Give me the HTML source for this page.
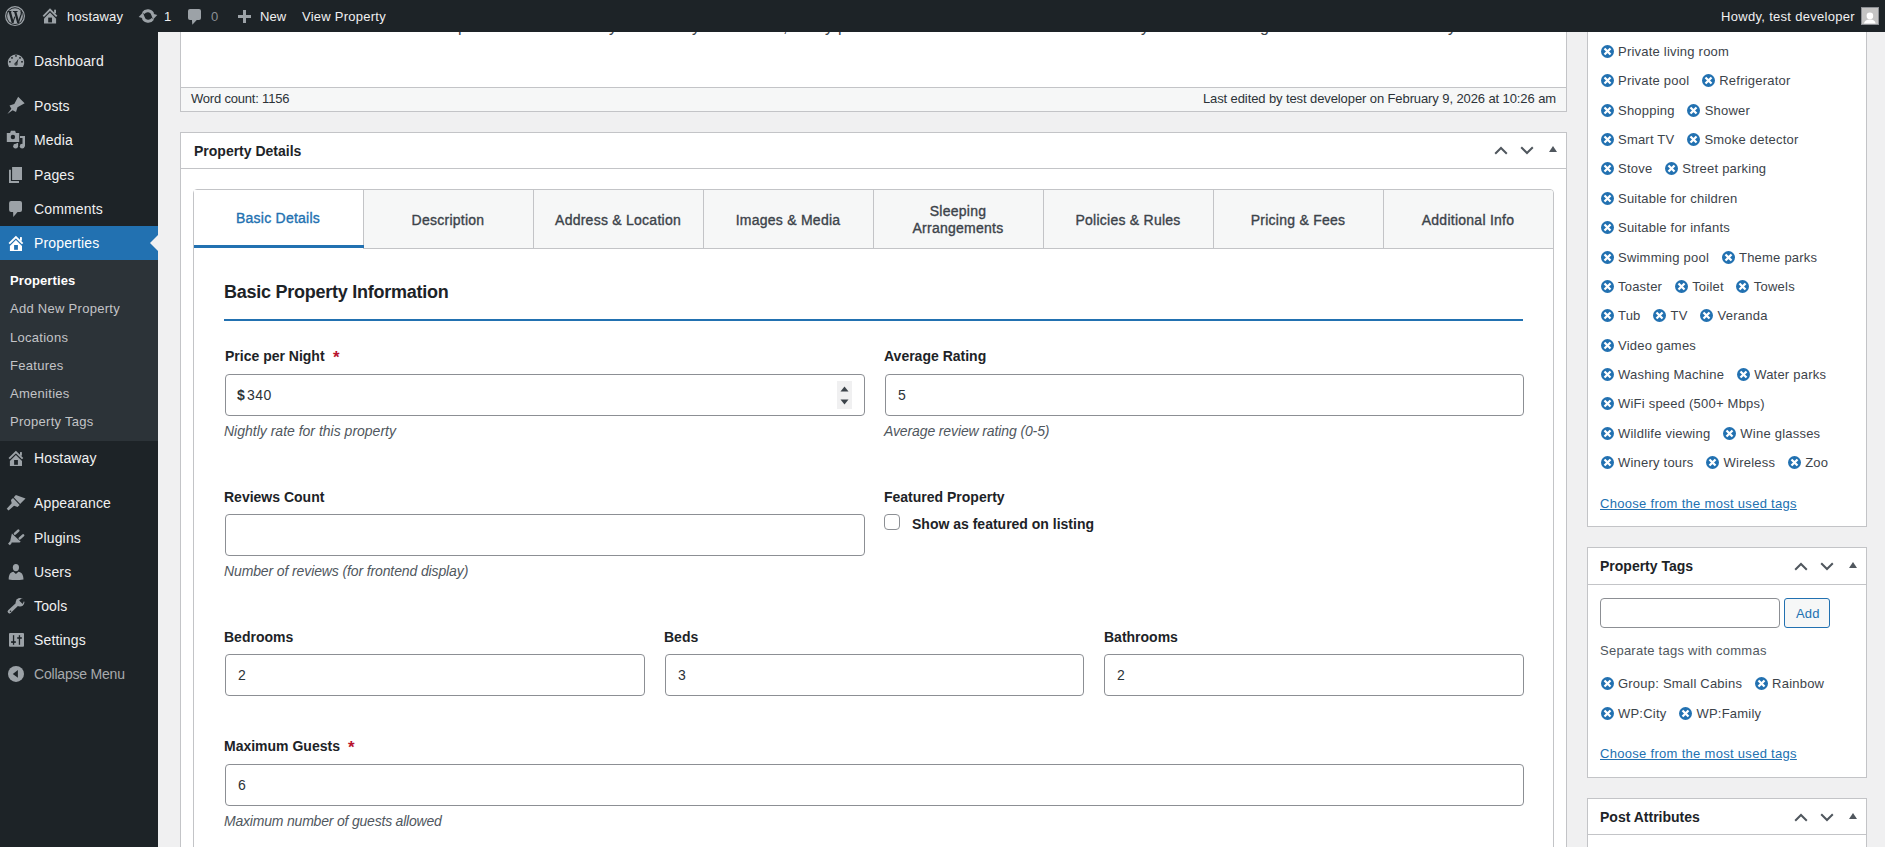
<!DOCTYPE html>
<html><head><meta charset="utf-8"><title>Edit Property</title>
<style>
html,body{margin:0;padding:0;}
body{width:1885px;height:847px;overflow:hidden;background:#f0f0f1;position:relative;font-family:"Liberation Sans",sans-serif;}
.a{position:absolute;box-sizing:border-box;}
.t{position:absolute;white-space:nowrap;}
</style></head><body>

<div class="a" style="left:180px;top:20px;width:1387px;height:92px;background:#fff;border:1px solid #c3c4c7;"></div>
<div class="t" style="left:218px;top:19px;font-size:16px;line-height:16px;color:#3c434a;font-weight:normal;font-style:normal;letter-spacing:0px;font-family:"Liberation Serif", serif;width:1330px;overflow:hidden;">as the result of the storied tradition in the realm of the hotel and inn this home is as close to resort as it comes and the best of the modern amenities are all added to it to enrich the stead and comfort of the home for all the visitors</div>
<div class="t" style="left:458px;top:19px;font-size:16px;line-height:16px;color:#3c434a;font-weight:normal;font-style:normal;letter-spacing:0px;font-family:"Liberation Serif", serif;background:#fff;padding:0 1px;">p</div>
<div class="t" style="left:609px;top:19px;font-size:16px;line-height:16px;color:#3c434a;font-weight:normal;font-style:normal;letter-spacing:0px;font-family:"Liberation Serif", serif;background:#fff;padding:0 1px;">y</div>
<div class="t" style="left:692px;top:19px;font-size:16px;line-height:16px;color:#3c434a;font-weight:normal;font-style:normal;letter-spacing:0px;font-family:"Liberation Serif", serif;background:#fff;padding:0 1px;">y</div>
<div class="t" style="left:783px;top:19px;font-size:16px;line-height:16px;color:#3c434a;font-weight:normal;font-style:normal;letter-spacing:0px;font-family:"Liberation Serif", serif;background:#fff;padding:0 1px;">,</div>
<div class="t" style="left:825px;top:19px;font-size:16px;line-height:16px;color:#3c434a;font-weight:normal;font-style:normal;letter-spacing:0px;font-family:"Liberation Serif", serif;background:#fff;padding:0 1px;">y</div>
<div class="t" style="left:838px;top:19px;font-size:16px;line-height:16px;color:#3c434a;font-weight:normal;font-style:normal;letter-spacing:0px;font-family:"Liberation Serif", serif;background:#fff;padding:0 1px;">p</div>
<div class="t" style="left:1141px;top:19px;font-size:16px;line-height:16px;color:#3c434a;font-weight:normal;font-style:normal;letter-spacing:0px;font-family:"Liberation Serif", serif;background:#fff;padding:0 1px;">y</div>
<div class="t" style="left:1260px;top:19px;font-size:16px;line-height:16px;color:#3c434a;font-weight:normal;font-style:normal;letter-spacing:0px;font-family:"Liberation Serif", serif;background:#fff;padding:0 1px;">g</div>
<div class="t" style="left:1448px;top:19px;font-size:16px;line-height:16px;color:#3c434a;font-weight:normal;font-style:normal;letter-spacing:0px;font-family:"Liberation Serif", serif;background:#fff;padding:0 1px;">y</div>
<div class="a" style="left:180px;top:87px;width:1387px;height:25px;background:#f6f7f7;border:1px solid #c3c4c7;"></div>
<div class="t" style="left:191px;top:92px;font-size:13px;line-height:13px;color:#2c3338;font-weight:normal;font-style:normal;letter-spacing:-0.2px;">Word count: 1156</div>
<div class="t" style="right:329px;top:92px;font-size:13px;line-height:13px;color:#2c3338;letter-spacing:-0.1px">Last edited by test developer on February 9, 2026 at 10:26 am</div>
<div class="a" style="left:180px;top:132px;width:1387px;height:760px;background:#fff;border:1px solid #c3c4c7;"></div>
<div class="a" style="left:180px;top:168px;width:1387px;height:1px;background:#c3c4c7;"></div>
<div class="t" style="left:194px;top:144px;font-size:14px;line-height:14px;color:#1d2327;font-weight:bold;font-style:normal;letter-spacing:0px;">Property Details</div>
<svg class="a" style="left:1494px;top:146px;" width="14" height="9" viewBox="0 0 14 9"><polyline points="1.2,7.8 7,2 12.8,7.8" fill="none" stroke="#50575e" stroke-width="2"/></svg>
<svg class="a" style="left:1520px;top:146px;" width="14" height="9" viewBox="0 0 14 9"><polyline points="1.2,1.2 7,7 12.8,1.2" fill="none" stroke="#50575e" stroke-width="2"/></svg>
<svg class="a" style="left:1549px;top:146px;" width="8" height="7" viewBox="0 0 8 7"><polygon points="0,6 4,0 8,6" fill="#50575e"/></svg>
<div class="a" style="left:193px;top:189px;width:1361px;height:700px;background:#fff;border:1px solid #c3c4c7;border-radius:4px 4px 0 0;"></div>
<div class="a" style="left:194px;top:190px;width:169px;height:55px;background:#fff;"></div>
<div class="a" style="left:363px;top:190px;width:170px;height:59px;background:#f6f7f7;border-left:1px solid #c3c4c7;border-bottom:1px solid #c3c4c7;"></div>
<div class="a" style="left:533px;top:190px;width:170px;height:59px;background:#f6f7f7;border-left:1px solid #c3c4c7;border-bottom:1px solid #c3c4c7;"></div>
<div class="a" style="left:703px;top:190px;width:170px;height:59px;background:#f6f7f7;border-left:1px solid #c3c4c7;border-bottom:1px solid #c3c4c7;"></div>
<div class="a" style="left:873px;top:190px;width:170px;height:59px;background:#f6f7f7;border-left:1px solid #c3c4c7;border-bottom:1px solid #c3c4c7;"></div>
<div class="a" style="left:1043px;top:190px;width:170px;height:59px;background:#f6f7f7;border-left:1px solid #c3c4c7;border-bottom:1px solid #c3c4c7;"></div>
<div class="a" style="left:1213px;top:190px;width:170px;height:59px;background:#f6f7f7;border-left:1px solid #c3c4c7;border-bottom:1px solid #c3c4c7;"></div>
<div class="a" style="left:1383px;top:190px;width:170px;height:59px;background:#f6f7f7;border-left:1px solid #c3c4c7;border-bottom:1px solid #c3c4c7;border-top-right-radius:3px;"></div>
<div class="a" style="left:194px;top:245px;width:170px;height:3px;background:#2271b1;"></div>
<div class="t" style="left:193px;width:170px;text-align:center;top:211px;font-size:14px;line-height:14px;color:#2271b1;letter-spacing:0.25px;-webkit-text-stroke:0.35px #2271b1;">Basic Details</div>
<div class="t" style="left:363px;width:170px;text-align:center;top:213px;font-size:14px;line-height:14px;color:#3c434a;letter-spacing:0.25px;-webkit-text-stroke:0.35px #3c434a;">Description</div>
<div class="t" style="left:533px;width:170px;text-align:center;top:213px;font-size:14px;line-height:14px;color:#3c434a;letter-spacing:0.25px;-webkit-text-stroke:0.35px #3c434a;">Address &amp; Location</div>
<div class="t" style="left:703px;width:170px;text-align:center;top:213px;font-size:14px;line-height:14px;color:#3c434a;letter-spacing:0.25px;-webkit-text-stroke:0.35px #3c434a;">Images &amp; Media</div>
<div class="t" style="left:873px;width:170px;text-align:center;top:203px;font-size:14px;line-height:17px;color:#3c434a;letter-spacing:0.25px;-webkit-text-stroke:0.35px #3c434a;">Sleeping<br>Arrangements</div>
<div class="t" style="left:1043px;width:170px;text-align:center;top:213px;font-size:14px;line-height:14px;color:#3c434a;letter-spacing:0.25px;-webkit-text-stroke:0.35px #3c434a;">Policies &amp; Rules</div>
<div class="t" style="left:1213px;width:170px;text-align:center;top:213px;font-size:14px;line-height:14px;color:#3c434a;letter-spacing:0.25px;-webkit-text-stroke:0.35px #3c434a;">Pricing &amp; Fees</div>
<div class="t" style="left:1383px;width:170px;text-align:center;top:213px;font-size:14px;line-height:14px;color:#3c434a;letter-spacing:0.25px;-webkit-text-stroke:0.35px #3c434a;">Additional Info</div>
<div class="t" style="left:224px;top:283px;font-size:18px;line-height:18px;color:#1d2327;font-weight:bold;font-style:normal;letter-spacing:-0.25px;">Basic Property Information</div>
<div class="a" style="left:224px;top:319px;width:1299px;height:2px;background:#2271b1;"></div>
<div class="t" style="left:225px;top:349px;font-size:14px;line-height:14px;color:#1d2327;font-weight:bold;font-style:normal;letter-spacing:0px;">Price per Night</div>
<div class="t" style="left:333px;top:349px;font-size:17px;line-height:17px;color:#b8142f;font-weight:bold;font-style:normal;letter-spacing:0px;">*</div>
<div class="a" style="left:225px;top:374px;width:640px;height:42px;background:#fff;border:1px solid #8c8f94;border-radius:4px;"></div>
<div class="t" style="left:237px;top:388px;font-size:14px;line-height:14px;color:#2c3338;font-weight:bold;font-style:normal;letter-spacing:0px;">$</div>
<div class="t" style="left:247px;top:388px;font-size:14px;line-height:14px;color:#2c3338;font-weight:normal;font-style:normal;letter-spacing:0.5px;">340</div>
<div class="a" style="left:837px;top:381px;width:15px;height:28px;background:#f0f0f1;"></div>
<svg class="a" style="left:840px;top:386px;" width="9" height="6" viewBox="0 0 9 6"><polygon points="0.5,5.5 4.5,0.5 8.5,5.5" fill="#3c434a"/></svg>
<svg class="a" style="left:840px;top:399px;" width="9" height="6" viewBox="0 0 9 6"><polygon points="0.5,0.5 4.5,5.5 8.5,0.5" fill="#3c434a"/></svg>
<div class="t" style="left:224px;top:424px;font-size:14px;line-height:14px;color:#50575e;font-weight:normal;font-style:italic;letter-spacing:0px;">Nightly rate for this property</div>
<div class="t" style="left:884px;top:349px;font-size:14px;line-height:14px;color:#1d2327;font-weight:bold;font-style:normal;letter-spacing:0px;">Average Rating</div>
<div class="a" style="left:885px;top:374px;width:639px;height:42px;background:#fff;border:1px solid #8c8f94;border-radius:4px;"></div>
<div class="t" style="left:898px;top:388px;font-size:14px;line-height:14px;color:#2c3338;font-weight:normal;font-style:normal;letter-spacing:0px;">5</div>
<div class="t" style="left:884px;top:424px;font-size:14px;line-height:14px;color:#50575e;font-weight:normal;font-style:italic;letter-spacing:-0.12px;">Average review rating (0-5)</div>
<div class="t" style="left:224px;top:490px;font-size:14px;line-height:14px;color:#1d2327;font-weight:bold;font-style:normal;letter-spacing:0px;">Reviews Count</div>
<div class="a" style="left:225px;top:514px;width:640px;height:42px;background:#fff;border:1px solid #8c8f94;border-radius:4px;"></div>
<div class="t" style="left:224px;top:564px;font-size:14px;line-height:14px;color:#50575e;font-weight:normal;font-style:italic;letter-spacing:-0.12px;">Number of reviews (for frontend display)</div>
<div class="t" style="left:884px;top:490px;font-size:14px;line-height:14px;color:#1d2327;font-weight:bold;font-style:normal;letter-spacing:0px;">Featured Property</div>
<div class="a" style="left:884px;top:514px;width:16px;height:16px;background:#fff;border:1px solid #8c8f94;border-radius:4px;"></div>
<div class="t" style="left:912px;top:517px;font-size:14px;line-height:14px;color:#1d2327;font-weight:bold;font-style:normal;letter-spacing:0px;">Show as featured on listing</div>
<div class="t" style="left:224px;top:630px;font-size:14px;line-height:14px;color:#1d2327;font-weight:bold;font-style:normal;letter-spacing:0px;">Bedrooms</div>
<div class="a" style="left:225px;top:654px;width:420px;height:42px;background:#fff;border:1px solid #8c8f94;border-radius:4px;"></div>
<div class="t" style="left:238px;top:668px;font-size:14px;line-height:14px;color:#2c3338;font-weight:normal;font-style:normal;letter-spacing:0px;">2</div>
<div class="t" style="left:664px;top:630px;font-size:14px;line-height:14px;color:#1d2327;font-weight:bold;font-style:normal;letter-spacing:0px;">Beds</div>
<div class="a" style="left:665px;top:654px;width:419px;height:42px;background:#fff;border:1px solid #8c8f94;border-radius:4px;"></div>
<div class="t" style="left:678px;top:668px;font-size:14px;line-height:14px;color:#2c3338;font-weight:normal;font-style:normal;letter-spacing:0px;">3</div>
<div class="t" style="left:1104px;top:630px;font-size:14px;line-height:14px;color:#1d2327;font-weight:bold;font-style:normal;letter-spacing:0px;">Bathrooms</div>
<div class="a" style="left:1104px;top:654px;width:420px;height:42px;background:#fff;border:1px solid #8c8f94;border-radius:4px;"></div>
<div class="t" style="left:1117px;top:668px;font-size:14px;line-height:14px;color:#2c3338;font-weight:normal;font-style:normal;letter-spacing:0px;">2</div>
<div class="t" style="left:224px;top:739px;font-size:14px;line-height:14px;color:#1d2327;font-weight:bold;font-style:normal;letter-spacing:0px;">Maximum Guests</div>
<div class="t" style="left:348px;top:739px;font-size:17px;line-height:17px;color:#b8142f;font-weight:bold;font-style:normal;letter-spacing:0px;">*</div>
<div class="a" style="left:225px;top:764px;width:1299px;height:42px;background:#fff;border:1px solid #8c8f94;border-radius:4px;"></div>
<div class="t" style="left:238px;top:778px;font-size:14px;line-height:14px;color:#2c3338;font-weight:normal;font-style:normal;letter-spacing:0px;">6</div>
<div class="t" style="left:224px;top:814px;font-size:14px;line-height:14px;color:#50575e;font-weight:normal;font-style:italic;letter-spacing:-0.2px;">Maximum number of guests allowed</div>
<div class="a" style="left:1587px;top:20px;width:280px;height:507px;background:#fff;border:1px solid #c3c4c7;"></div>
<div class="t" style="left:1600px;top:45px;font-size:13px;line-height:13px;color:#3c434a;display:flex;"><span style="display:inline-flex;align-items:flex-start;margin-right:12px;"><svg width="13" height="13" viewBox="0 0 13 13" style="margin-right:4.4px;margin-left:0.6px;margin-top:0.4px"><circle cx="6.5" cy="6.5" r="6.5" fill="#2271b1"/><path d="M3.5 3.5 L9.5 9.5 M9.5 3.5 L3.5 9.5" stroke="#fff" stroke-width="2.3"/></svg><span style="letter-spacing:0.22px">Private living room</span></span></div>
<div class="t" style="left:1600px;top:74px;font-size:13px;line-height:13px;color:#3c434a;display:flex;"><span style="display:inline-flex;align-items:flex-start;margin-right:12px;"><svg width="13" height="13" viewBox="0 0 13 13" style="margin-right:4.4px;margin-left:0.6px;margin-top:0.4px"><circle cx="6.5" cy="6.5" r="6.5" fill="#2271b1"/><path d="M3.5 3.5 L9.5 9.5 M9.5 3.5 L3.5 9.5" stroke="#fff" stroke-width="2.3"/></svg><span style="letter-spacing:0.22px">Private pool</span></span><span style="display:inline-flex;align-items:flex-start;margin-right:12px;"><svg width="13" height="13" viewBox="0 0 13 13" style="margin-right:4.4px;margin-left:0.6px;margin-top:0.4px"><circle cx="6.5" cy="6.5" r="6.5" fill="#2271b1"/><path d="M3.5 3.5 L9.5 9.5 M9.5 3.5 L3.5 9.5" stroke="#fff" stroke-width="2.3"/></svg><span style="letter-spacing:0.22px">Refrigerator</span></span></div>
<div class="t" style="left:1600px;top:104px;font-size:13px;line-height:13px;color:#3c434a;display:flex;"><span style="display:inline-flex;align-items:flex-start;margin-right:12px;"><svg width="13" height="13" viewBox="0 0 13 13" style="margin-right:4.4px;margin-left:0.6px;margin-top:0.4px"><circle cx="6.5" cy="6.5" r="6.5" fill="#2271b1"/><path d="M3.5 3.5 L9.5 9.5 M9.5 3.5 L3.5 9.5" stroke="#fff" stroke-width="2.3"/></svg><span style="letter-spacing:0.22px">Shopping</span></span><span style="display:inline-flex;align-items:flex-start;margin-right:12px;"><svg width="13" height="13" viewBox="0 0 13 13" style="margin-right:4.4px;margin-left:0.6px;margin-top:0.4px"><circle cx="6.5" cy="6.5" r="6.5" fill="#2271b1"/><path d="M3.5 3.5 L9.5 9.5 M9.5 3.5 L3.5 9.5" stroke="#fff" stroke-width="2.3"/></svg><span style="letter-spacing:0.22px">Shower</span></span></div>
<div class="t" style="left:1600px;top:133px;font-size:13px;line-height:13px;color:#3c434a;display:flex;"><span style="display:inline-flex;align-items:flex-start;margin-right:12px;"><svg width="13" height="13" viewBox="0 0 13 13" style="margin-right:4.4px;margin-left:0.6px;margin-top:0.4px"><circle cx="6.5" cy="6.5" r="6.5" fill="#2271b1"/><path d="M3.5 3.5 L9.5 9.5 M9.5 3.5 L3.5 9.5" stroke="#fff" stroke-width="2.3"/></svg><span style="letter-spacing:0.22px">Smart TV</span></span><span style="display:inline-flex;align-items:flex-start;margin-right:12px;"><svg width="13" height="13" viewBox="0 0 13 13" style="margin-right:4.4px;margin-left:0.6px;margin-top:0.4px"><circle cx="6.5" cy="6.5" r="6.5" fill="#2271b1"/><path d="M3.5 3.5 L9.5 9.5 M9.5 3.5 L3.5 9.5" stroke="#fff" stroke-width="2.3"/></svg><span style="letter-spacing:0.22px">Smoke detector</span></span></div>
<div class="t" style="left:1600px;top:162px;font-size:13px;line-height:13px;color:#3c434a;display:flex;"><span style="display:inline-flex;align-items:flex-start;margin-right:12px;"><svg width="13" height="13" viewBox="0 0 13 13" style="margin-right:4.4px;margin-left:0.6px;margin-top:0.4px"><circle cx="6.5" cy="6.5" r="6.5" fill="#2271b1"/><path d="M3.5 3.5 L9.5 9.5 M9.5 3.5 L3.5 9.5" stroke="#fff" stroke-width="2.3"/></svg><span style="letter-spacing:0.22px">Stove</span></span><span style="display:inline-flex;align-items:flex-start;margin-right:12px;"><svg width="13" height="13" viewBox="0 0 13 13" style="margin-right:4.4px;margin-left:0.6px;margin-top:0.4px"><circle cx="6.5" cy="6.5" r="6.5" fill="#2271b1"/><path d="M3.5 3.5 L9.5 9.5 M9.5 3.5 L3.5 9.5" stroke="#fff" stroke-width="2.3"/></svg><span style="letter-spacing:0.22px">Street parking</span></span></div>
<div class="t" style="left:1600px;top:192px;font-size:13px;line-height:13px;color:#3c434a;display:flex;"><span style="display:inline-flex;align-items:flex-start;margin-right:12px;"><svg width="13" height="13" viewBox="0 0 13 13" style="margin-right:4.4px;margin-left:0.6px;margin-top:0.4px"><circle cx="6.5" cy="6.5" r="6.5" fill="#2271b1"/><path d="M3.5 3.5 L9.5 9.5 M9.5 3.5 L3.5 9.5" stroke="#fff" stroke-width="2.3"/></svg><span style="letter-spacing:0.22px">Suitable for children</span></span></div>
<div class="t" style="left:1600px;top:221px;font-size:13px;line-height:13px;color:#3c434a;display:flex;"><span style="display:inline-flex;align-items:flex-start;margin-right:12px;"><svg width="13" height="13" viewBox="0 0 13 13" style="margin-right:4.4px;margin-left:0.6px;margin-top:0.4px"><circle cx="6.5" cy="6.5" r="6.5" fill="#2271b1"/><path d="M3.5 3.5 L9.5 9.5 M9.5 3.5 L3.5 9.5" stroke="#fff" stroke-width="2.3"/></svg><span style="letter-spacing:0.22px">Suitable for infants</span></span></div>
<div class="t" style="left:1600px;top:251px;font-size:13px;line-height:13px;color:#3c434a;display:flex;"><span style="display:inline-flex;align-items:flex-start;margin-right:12px;"><svg width="13" height="13" viewBox="0 0 13 13" style="margin-right:4.4px;margin-left:0.6px;margin-top:0.4px"><circle cx="6.5" cy="6.5" r="6.5" fill="#2271b1"/><path d="M3.5 3.5 L9.5 9.5 M9.5 3.5 L3.5 9.5" stroke="#fff" stroke-width="2.3"/></svg><span style="letter-spacing:0.22px">Swimming pool</span></span><span style="display:inline-flex;align-items:flex-start;margin-right:12px;"><svg width="13" height="13" viewBox="0 0 13 13" style="margin-right:4.4px;margin-left:0.6px;margin-top:0.4px"><circle cx="6.5" cy="6.5" r="6.5" fill="#2271b1"/><path d="M3.5 3.5 L9.5 9.5 M9.5 3.5 L3.5 9.5" stroke="#fff" stroke-width="2.3"/></svg><span style="letter-spacing:0.22px">Theme parks</span></span></div>
<div class="t" style="left:1600px;top:280px;font-size:13px;line-height:13px;color:#3c434a;display:flex;"><span style="display:inline-flex;align-items:flex-start;margin-right:12px;"><svg width="13" height="13" viewBox="0 0 13 13" style="margin-right:4.4px;margin-left:0.6px;margin-top:0.4px"><circle cx="6.5" cy="6.5" r="6.5" fill="#2271b1"/><path d="M3.5 3.5 L9.5 9.5 M9.5 3.5 L3.5 9.5" stroke="#fff" stroke-width="2.3"/></svg><span style="letter-spacing:0.22px">Toaster</span></span><span style="display:inline-flex;align-items:flex-start;margin-right:12px;"><svg width="13" height="13" viewBox="0 0 13 13" style="margin-right:4.4px;margin-left:0.6px;margin-top:0.4px"><circle cx="6.5" cy="6.5" r="6.5" fill="#2271b1"/><path d="M3.5 3.5 L9.5 9.5 M9.5 3.5 L3.5 9.5" stroke="#fff" stroke-width="2.3"/></svg><span style="letter-spacing:0.22px">Toilet</span></span><span style="display:inline-flex;align-items:flex-start;margin-right:12px;"><svg width="13" height="13" viewBox="0 0 13 13" style="margin-right:4.4px;margin-left:0.6px;margin-top:0.4px"><circle cx="6.5" cy="6.5" r="6.5" fill="#2271b1"/><path d="M3.5 3.5 L9.5 9.5 M9.5 3.5 L3.5 9.5" stroke="#fff" stroke-width="2.3"/></svg><span style="letter-spacing:0.22px">Towels</span></span></div>
<div class="t" style="left:1600px;top:309px;font-size:13px;line-height:13px;color:#3c434a;display:flex;"><span style="display:inline-flex;align-items:flex-start;margin-right:12px;"><svg width="13" height="13" viewBox="0 0 13 13" style="margin-right:4.4px;margin-left:0.6px;margin-top:0.4px"><circle cx="6.5" cy="6.5" r="6.5" fill="#2271b1"/><path d="M3.5 3.5 L9.5 9.5 M9.5 3.5 L3.5 9.5" stroke="#fff" stroke-width="2.3"/></svg><span style="letter-spacing:0.22px">Tub</span></span><span style="display:inline-flex;align-items:flex-start;margin-right:12px;"><svg width="13" height="13" viewBox="0 0 13 13" style="margin-right:4.4px;margin-left:0.6px;margin-top:0.4px"><circle cx="6.5" cy="6.5" r="6.5" fill="#2271b1"/><path d="M3.5 3.5 L9.5 9.5 M9.5 3.5 L3.5 9.5" stroke="#fff" stroke-width="2.3"/></svg><span style="letter-spacing:0.22px">TV</span></span><span style="display:inline-flex;align-items:flex-start;margin-right:12px;"><svg width="13" height="13" viewBox="0 0 13 13" style="margin-right:4.4px;margin-left:0.6px;margin-top:0.4px"><circle cx="6.5" cy="6.5" r="6.5" fill="#2271b1"/><path d="M3.5 3.5 L9.5 9.5 M9.5 3.5 L3.5 9.5" stroke="#fff" stroke-width="2.3"/></svg><span style="letter-spacing:0.22px">Veranda</span></span></div>
<div class="t" style="left:1600px;top:339px;font-size:13px;line-height:13px;color:#3c434a;display:flex;"><span style="display:inline-flex;align-items:flex-start;margin-right:12px;"><svg width="13" height="13" viewBox="0 0 13 13" style="margin-right:4.4px;margin-left:0.6px;margin-top:0.4px"><circle cx="6.5" cy="6.5" r="6.5" fill="#2271b1"/><path d="M3.5 3.5 L9.5 9.5 M9.5 3.5 L3.5 9.5" stroke="#fff" stroke-width="2.3"/></svg><span style="letter-spacing:0.22px">Video games</span></span></div>
<div class="t" style="left:1600px;top:368px;font-size:13px;line-height:13px;color:#3c434a;display:flex;"><span style="display:inline-flex;align-items:flex-start;margin-right:12px;"><svg width="13" height="13" viewBox="0 0 13 13" style="margin-right:4.4px;margin-left:0.6px;margin-top:0.4px"><circle cx="6.5" cy="6.5" r="6.5" fill="#2271b1"/><path d="M3.5 3.5 L9.5 9.5 M9.5 3.5 L3.5 9.5" stroke="#fff" stroke-width="2.3"/></svg><span style="letter-spacing:0.22px">Washing Machine</span></span><span style="display:inline-flex;align-items:flex-start;margin-right:12px;"><svg width="13" height="13" viewBox="0 0 13 13" style="margin-right:4.4px;margin-left:0.6px;margin-top:0.4px"><circle cx="6.5" cy="6.5" r="6.5" fill="#2271b1"/><path d="M3.5 3.5 L9.5 9.5 M9.5 3.5 L3.5 9.5" stroke="#fff" stroke-width="2.3"/></svg><span style="letter-spacing:0.22px">Water parks</span></span></div>
<div class="t" style="left:1600px;top:397px;font-size:13px;line-height:13px;color:#3c434a;display:flex;"><span style="display:inline-flex;align-items:flex-start;margin-right:12px;"><svg width="13" height="13" viewBox="0 0 13 13" style="margin-right:4.4px;margin-left:0.6px;margin-top:0.4px"><circle cx="6.5" cy="6.5" r="6.5" fill="#2271b1"/><path d="M3.5 3.5 L9.5 9.5 M9.5 3.5 L3.5 9.5" stroke="#fff" stroke-width="2.3"/></svg><span style="letter-spacing:0.22px">WiFi speed (500+ Mbps)</span></span></div>
<div class="t" style="left:1600px;top:427px;font-size:13px;line-height:13px;color:#3c434a;display:flex;"><span style="display:inline-flex;align-items:flex-start;margin-right:12px;"><svg width="13" height="13" viewBox="0 0 13 13" style="margin-right:4.4px;margin-left:0.6px;margin-top:0.4px"><circle cx="6.5" cy="6.5" r="6.5" fill="#2271b1"/><path d="M3.5 3.5 L9.5 9.5 M9.5 3.5 L3.5 9.5" stroke="#fff" stroke-width="2.3"/></svg><span style="letter-spacing:0.22px">Wildlife viewing</span></span><span style="display:inline-flex;align-items:flex-start;margin-right:12px;"><svg width="13" height="13" viewBox="0 0 13 13" style="margin-right:4.4px;margin-left:0.6px;margin-top:0.4px"><circle cx="6.5" cy="6.5" r="6.5" fill="#2271b1"/><path d="M3.5 3.5 L9.5 9.5 M9.5 3.5 L3.5 9.5" stroke="#fff" stroke-width="2.3"/></svg><span style="letter-spacing:0.22px">Wine glasses</span></span></div>
<div class="t" style="left:1600px;top:456px;font-size:13px;line-height:13px;color:#3c434a;display:flex;"><span style="display:inline-flex;align-items:flex-start;margin-right:12px;"><svg width="13" height="13" viewBox="0 0 13 13" style="margin-right:4.4px;margin-left:0.6px;margin-top:0.4px"><circle cx="6.5" cy="6.5" r="6.5" fill="#2271b1"/><path d="M3.5 3.5 L9.5 9.5 M9.5 3.5 L3.5 9.5" stroke="#fff" stroke-width="2.3"/></svg><span style="letter-spacing:0.22px">Winery tours</span></span><span style="display:inline-flex;align-items:flex-start;margin-right:12px;"><svg width="13" height="13" viewBox="0 0 13 13" style="margin-right:4.4px;margin-left:0.6px;margin-top:0.4px"><circle cx="6.5" cy="6.5" r="6.5" fill="#2271b1"/><path d="M3.5 3.5 L9.5 9.5 M9.5 3.5 L3.5 9.5" stroke="#fff" stroke-width="2.3"/></svg><span style="letter-spacing:0.22px">Wireless</span></span><span style="display:inline-flex;align-items:flex-start;margin-right:12px;"><svg width="13" height="13" viewBox="0 0 13 13" style="margin-right:4.4px;margin-left:0.6px;margin-top:0.4px"><circle cx="6.5" cy="6.5" r="6.5" fill="#2271b1"/><path d="M3.5 3.5 L9.5 9.5 M9.5 3.5 L3.5 9.5" stroke="#fff" stroke-width="2.3"/></svg><span style="letter-spacing:0.22px">Zoo</span></span></div>
<div class="t" style="left:1600px;top:497px;font-size:13px;line-height:13px;color:#2271b1;text-decoration:underline;letter-spacing:0.3px">Choose from the most used tags</div>
<div class="a" style="left:1587px;top:547px;width:280px;height:231px;background:#fff;border:1px solid #c3c4c7;"></div>
<div class="a" style="left:1587px;top:584px;width:280px;height:1px;background:#c3c4c7;"></div>
<div class="t" style="left:1600px;top:559px;font-size:14px;line-height:14px;color:#1d2327;font-weight:bold;font-style:normal;letter-spacing:0px;">Property Tags</div>
<svg class="a" style="left:1794px;top:562px;" width="14" height="9" viewBox="0 0 14 9"><polyline points="1.2,7.8 7,2 12.8,7.8" fill="none" stroke="#50575e" stroke-width="2"/></svg>
<svg class="a" style="left:1820px;top:562px;" width="14" height="9" viewBox="0 0 14 9"><polyline points="1.2,1.2 7,7 12.8,1.2" fill="none" stroke="#50575e" stroke-width="2"/></svg>
<svg class="a" style="left:1849px;top:562px;" width="8" height="7" viewBox="0 0 8 7"><polygon points="0,6 4,0 8,6" fill="#50575e"/></svg>
<div class="a" style="left:1600px;top:598px;width:180px;height:30px;background:#fff;border:1px solid #8c8f94;border-radius:4px;"></div>
<div class="a" style="left:1784px;top:598px;width:46px;height:30px;background:#f6f7f7;border:1px solid #2271b1;border-radius:3px;"></div>
<div class="t" style="left:1796px;top:607px;font-size:13px;line-height:13px;color:#2271b1;font-weight:normal;font-style:normal;letter-spacing:0.2px;">Add</div>
<div class="t" style="left:1600px;top:644px;font-size:13px;line-height:13px;color:#50575e;font-weight:normal;font-style:normal;letter-spacing:0.25px;">Separate tags with commas</div>
<div class="t" style="left:1600px;top:677px;font-size:13px;line-height:13px;color:#3c434a;display:flex;"><span style="display:inline-flex;align-items:flex-start;margin-right:12px;"><svg width="13" height="13" viewBox="0 0 13 13" style="margin-right:4.4px;margin-left:0.6px;margin-top:0.4px"><circle cx="6.5" cy="6.5" r="6.5" fill="#2271b1"/><path d="M3.5 3.5 L9.5 9.5 M9.5 3.5 L3.5 9.5" stroke="#fff" stroke-width="2.3"/></svg><span style="letter-spacing:0.22px">Group: Small Cabins</span></span><span style="display:inline-flex;align-items:flex-start;margin-right:12px;"><svg width="13" height="13" viewBox="0 0 13 13" style="margin-right:4.4px;margin-left:0.6px;margin-top:0.4px"><circle cx="6.5" cy="6.5" r="6.5" fill="#2271b1"/><path d="M3.5 3.5 L9.5 9.5 M9.5 3.5 L3.5 9.5" stroke="#fff" stroke-width="2.3"/></svg><span style="letter-spacing:0.22px">Rainbow</span></span></div>
<div class="t" style="left:1600px;top:707px;font-size:13px;line-height:13px;color:#3c434a;display:flex;"><span style="display:inline-flex;align-items:flex-start;margin-right:12px;"><svg width="13" height="13" viewBox="0 0 13 13" style="margin-right:4.4px;margin-left:0.6px;margin-top:0.4px"><circle cx="6.5" cy="6.5" r="6.5" fill="#2271b1"/><path d="M3.5 3.5 L9.5 9.5 M9.5 3.5 L3.5 9.5" stroke="#fff" stroke-width="2.3"/></svg><span style="letter-spacing:0.22px">WP:City</span></span><span style="display:inline-flex;align-items:flex-start;margin-right:12px;"><svg width="13" height="13" viewBox="0 0 13 13" style="margin-right:4.4px;margin-left:0.6px;margin-top:0.4px"><circle cx="6.5" cy="6.5" r="6.5" fill="#2271b1"/><path d="M3.5 3.5 L9.5 9.5 M9.5 3.5 L3.5 9.5" stroke="#fff" stroke-width="2.3"/></svg><span style="letter-spacing:0.22px">WP:Family</span></span></div>
<div class="t" style="left:1600px;top:747px;font-size:13px;line-height:13px;color:#2271b1;text-decoration:underline;letter-spacing:0.3px">Choose from the most used tags</div>
<div class="a" style="left:1587px;top:798px;width:280px;height:100px;background:#fff;border:1px solid #c3c4c7;"></div>
<div class="a" style="left:1587px;top:834px;width:280px;height:1px;background:#c3c4c7;"></div>
<div class="t" style="left:1600px;top:810px;font-size:14px;line-height:14px;color:#1d2327;font-weight:bold;font-style:normal;letter-spacing:0px;">Post Attributes</div>
<svg class="a" style="left:1794px;top:813px;" width="14" height="9" viewBox="0 0 14 9"><polyline points="1.2,7.8 7,2 12.8,7.8" fill="none" stroke="#50575e" stroke-width="2"/></svg>
<svg class="a" style="left:1820px;top:813px;" width="14" height="9" viewBox="0 0 14 9"><polyline points="1.2,1.2 7,7 12.8,1.2" fill="none" stroke="#50575e" stroke-width="2"/></svg>
<svg class="a" style="left:1849px;top:813px;" width="8" height="7" viewBox="0 0 8 7"><polygon points="0,6 4,0 8,6" fill="#50575e"/></svg>
<div class="a" style="left:0px;top:32px;width:158px;height:815px;background:#1d2327;"></div>
<div class="a" style="left:0px;top:226px;width:158px;height:34px;background:#2271b1;"></div>
<svg class="a" style="left:150px;top:235px;" width="8" height="16" viewBox="0 0 8 16"><polygon points="8,0 0,8 8,16" fill="#f0f0f1"/></svg>
<div class="a" style="left:0px;top:260px;width:158px;height:181px;background:#2c3338;"></div>
<div class="t" style="left:34px;top:54px;font-size:14px;line-height:14px;color:#f0f0f1;font-weight:normal;font-style:normal;letter-spacing:0.15px;">Dashboard</div>
<div class="t" style="left:34px;top:99px;font-size:14px;line-height:14px;color:#f0f0f1;font-weight:normal;font-style:normal;letter-spacing:0.15px;">Posts</div>
<div class="t" style="left:34px;top:133px;font-size:14px;line-height:14px;color:#f0f0f1;font-weight:normal;font-style:normal;letter-spacing:0.15px;">Media</div>
<div class="t" style="left:34px;top:168px;font-size:14px;line-height:14px;color:#f0f0f1;font-weight:normal;font-style:normal;letter-spacing:0.15px;">Pages</div>
<div class="t" style="left:34px;top:202px;font-size:14px;line-height:14px;color:#f0f0f1;font-weight:normal;font-style:normal;letter-spacing:0.15px;">Comments</div>
<div class="t" style="left:34px;top:236px;font-size:14px;line-height:14px;color:#fff;font-weight:normal;font-style:normal;letter-spacing:0.15px;">Properties</div>
<div class="t" style="left:34px;top:451px;font-size:14px;line-height:14px;color:#f0f0f1;font-weight:normal;font-style:normal;letter-spacing:0.15px;">Hostaway</div>
<div class="t" style="left:34px;top:496px;font-size:14px;line-height:14px;color:#f0f0f1;font-weight:normal;font-style:normal;letter-spacing:0.15px;">Appearance</div>
<div class="t" style="left:34px;top:531px;font-size:14px;line-height:14px;color:#f0f0f1;font-weight:normal;font-style:normal;letter-spacing:0.15px;">Plugins</div>
<div class="t" style="left:34px;top:565px;font-size:14px;line-height:14px;color:#f0f0f1;font-weight:normal;font-style:normal;letter-spacing:0.15px;">Users</div>
<div class="t" style="left:34px;top:599px;font-size:14px;line-height:14px;color:#f0f0f1;font-weight:normal;font-style:normal;letter-spacing:0.15px;">Tools</div>
<div class="t" style="left:34px;top:633px;font-size:14px;line-height:14px;color:#f0f0f1;font-weight:normal;font-style:normal;letter-spacing:0.15px;">Settings</div>
<svg class="a" style="left:0;top:0" width="158" height="847" viewBox="0 0 158 847"><path d="M9,67.1 A8.25,8.25 0 1 1 23,67.1 Z" fill="#9ca2a7"/><rect x="15.2" y="55.1" width="1.6" height="1.6" fill="#1d2327"/><rect x="11.2" y="57.1" width="1.6" height="1.6" fill="#1d2327"/><rect x="19.2" y="57.1" width="1.6" height="1.6" fill="#1d2327"/><rect x="9.1" y="61.0" width="1.6" height="1.6" fill="#1d2327"/><rect x="21.2" y="61.0" width="1.6" height="1.6" fill="#1d2327"/><polygon points="18.6,58.4 17.2,63.8 14.8,63.8" fill="#1d2327"/><circle cx="16" cy="64" r="1.6" fill="#1d2327"/><circle cx="16" cy="64" r="0.6" fill="#9ca2a7"/><polygon points="7.40,114.10 12.63,110.14 16.03,111.98 17.51,107.24 24.65,103.35 18.15,96.85 14.26,103.99 9.52,105.47 11.36,108.87" fill="#9ca2a7"/><path d="M6.8,133.1 H10.1 L10.9,130.8 H15.1 L15.9,133.1 H19.2 V142 H6.8 Z" fill="#9ca2a7"/><circle cx="12.9" cy="137" r="2.2" fill="#1d2327"/><path d="M20,135.9 H25 V146.3 H22.5 V138.1 H20 Z" fill="#9ca2a7"/><circle cx="22.2" cy="146.2" r="2.4" fill="#9ca2a7"/><circle cx="15.6" cy="146.2" r="2.4" fill="#9ca2a7"/><rect x="16.4" y="143" width="1.7" height="3.5" fill="#9ca2a7"/><rect x="12.1" y="167" width="9.9" height="13" fill="#9ca2a7"/><path d="M9,169.8 H10.9 V181.1 H19 V183.1 H9 Z" fill="#9ca2a7"/><rect x="9.1" y="201.1" width="12.9" height="10.9" rx="2" fill="#9ca2a7"/><polygon points="13.1,211.5 13.3,217 18,211.5" fill="#9ca2a7"/><polyline points="9.2,243.7 15.9,237.0 22.6,243.7" fill="none" stroke="#fff" stroke-width="1.9"/><rect x="20" y="237.1" width="1.9" height="3.6" fill="#fff"/><polygon points="15.9,240.0 22,246.1 22,251 9.9,251 9.9,246.0" fill="#fff"/><rect x="14.1" y="245" width="3.8" height="4.8" fill="#2271b1"/><polyline points="9.2,458.7 15.9,452.0 22.6,458.7" fill="none" stroke="#9ca2a7" stroke-width="1.9"/><rect x="20" y="452.1" width="1.9" height="3.6" fill="#9ca2a7"/><polygon points="15.9,455.0 22,461.1 22,466 9.9,466 9.9,461.0" fill="#9ca2a7"/><rect x="14.1" y="460" width="3.8" height="4.8" fill="#1d2327"/><polygon points="13.75,497.35 15.85,495.06 25.53,498.51 20.11,503.99" fill="#9ca2a7"/><polygon points="8.52,510.53 14.06,505.77 17.57,506.97 19.67,504.97 13.02,498.04 10.93,500.04 11.71,503.31 6.72,508.65" fill="#9ca2a7"/><polygon points="11.9,533.5 20.7,541.8 19.6,542.6 10.4,542.6 10.1,541.5" fill="#9ca2a7"/><line x1="11" y1="542" x2="9" y2="544.6" stroke="#9ca2a7" stroke-width="2.4"/><line x1="15" y1="533.6" x2="18.3" y2="530.6" stroke="#9ca2a7" stroke-width="2.6" stroke-linecap="round"/><line x1="19.8" y1="538.4" x2="23.1" y2="535.4" stroke="#9ca2a7" stroke-width="2.6" stroke-linecap="round"/><ellipse cx="15.9" cy="567.6" rx="3.1" ry="3.7" fill="#9ca2a7"/><path d="M8.7,579.4 C8.7,574.5 10.5,572.2 13.4,571.8 L15.9,573.9 L18.4,571.8 C21.4,572.2 23.5,574.5 23.5,579.4 Q15.9,580.6 8.7,579.4 Z" fill="#9ca2a7"/><line x1="9.4" y1="611.6" x2="17.2" y2="604.2" stroke="#9ca2a7" stroke-width="3.6" stroke-linecap="round"/><circle cx="20" cy="602.2" r="4.3" fill="#9ca2a7"/><polygon points="19.2,600.6 21.4,598.4 24.8,599.5 22.6,603.9 20.6,602" fill="#1d2327"/><circle cx="10.5" cy="611.3" r="0.8" fill="#1d2327"/><rect x="9" y="633" width="15" height="13.8" rx="1" fill="#9ca2a7"/><rect x="12.9" y="635.2" width="1.3" height="9.6" fill="#1d2327"/><rect x="11.1" y="641.2" width="4.7" height="1.7" fill="#1d2327"/><rect x="18.8" y="635.2" width="1.3" height="9.6" fill="#1d2327"/><rect x="17.2" y="637.2" width="4.6" height="1.6" fill="#1d2327"/><circle cx="16" cy="673.9" r="8" fill="#9ca2a7"/><polygon points="12.8,673.9 17.9,670 17.9,677.7" fill="#1d2327"/></svg>
<div class="t" style="left:34px;top:667px;font-size:14px;line-height:14px;color:#a7aaad;font-weight:normal;font-style:normal;letter-spacing:-0.2px;">Collapse Menu</div>
<div class="t" style="left:10px;top:274px;font-size:13px;line-height:13px;color:#fff;font-weight:bold;font-style:normal;letter-spacing:0.1px;">Properties</div>
<div class="t" style="left:10px;top:302px;font-size:13px;line-height:13px;color:#c3c4c7;font-weight:normal;font-style:normal;letter-spacing:0.28px;">Add New Property</div>
<div class="t" style="left:10px;top:331px;font-size:13px;line-height:13px;color:#c3c4c7;font-weight:normal;font-style:normal;letter-spacing:0.28px;">Locations</div>
<div class="t" style="left:10px;top:359px;font-size:13px;line-height:13px;color:#c3c4c7;font-weight:normal;font-style:normal;letter-spacing:0.28px;">Features</div>
<div class="t" style="left:10px;top:387px;font-size:13px;line-height:13px;color:#c3c4c7;font-weight:normal;font-style:normal;letter-spacing:0.28px;">Amenities</div>
<div class="t" style="left:10px;top:415px;font-size:13px;line-height:13px;color:#c3c4c7;font-weight:normal;font-style:normal;letter-spacing:0.28px;">Property Tags</div>
<div class="a" style="left:0px;top:0px;width:1885px;height:32px;background:#1d2327;"></div>
<svg class="a" style="left:0;top:0" width="60" height="32" viewBox="0 0 60 32"><circle cx="15" cy="16.1" r="9.4" fill="none" stroke="#9ca2a7" stroke-width="1.2"/><circle cx="15" cy="16.1" r="7.9" fill="#9ca2a7"/><g stroke="#1d2327" fill="none"><path d="M7.4 11.5 H11.4 M12.9 11.5 H17.6" stroke-width="1.1"/><path d="M9.7 11.4 L12.8 22.9 M15.1 11.4 L18.3 22.9" stroke-width="2.2"/><path d="M12.8 22.9 L14.8 16.6" stroke-width="1.1"/><path d="M18.3 22.9 L21.2 14.3 Q21.8 12.3 20.9 10.6" stroke-width="1.3"/></g><g transform="translate(34.1,0)"><polyline points="9.2,16.3 15.9,9.6 22.6,16.3" fill="none" stroke="#9ca2a7" stroke-width="1.9"/><rect x="20" y="9.7" width="1.9" height="3.6" fill="#9ca2a7"/><polygon points="15.9,12.6 22,18.700000000000003 22,23.6 9.9,23.6 9.9,18.6" fill="#9ca2a7"/><rect x="14.1" y="17.6" width="3.8" height="4.8" fill="#1d2327"/></g></svg>
<div class="t" style="left:67px;top:10px;font-size:13px;line-height:13px;color:#f0f0f1;font-weight:normal;font-style:normal;letter-spacing:0.15px;">hostaway</div>
<svg class="a" style="left:134px;top:4px;" width="30" height="26" viewBox="134 4 30 26"><path d="M143.2 13.1 A5.6 5.6 0 0 1 152.9 14.1" fill="none" stroke="#9ca2a7" stroke-width="2.9"/><polygon points="150.6,13.0 157.3,15.0 153.0,19.4" fill="#9ca2a7"/><path d="M152.8 18.9 A5.6 5.6 0 0 1 143.1 17.9" fill="none" stroke="#9ca2a7" stroke-width="2.9"/><polygon points="138.7,16.9 142.9,12.6 145.4,19.0" fill="#9ca2a7"/></svg>
<div class="t" style="left:164px;top:10px;font-size:13px;line-height:13px;color:#f0f0f1;font-weight:normal;font-style:normal;letter-spacing:0px;">1</div>
<svg class="a" style="left:182px;top:4px;" width="24" height="24" viewBox="182 4 24 24"><rect x="188" y="9" width="13" height="11" rx="2" fill="#9ca2a7"/><polygon points="191.9,19.5 192.3,24.8 197.2,19.5" fill="#9ca2a7"/></svg>
<div class="t" style="left:211px;top:10px;font-size:13px;line-height:13px;color:#8c8f94;font-weight:normal;font-style:normal;letter-spacing:0px;">0</div>
<div class="a" style="left:243px;top:10px;width:3px;height:13px;background:#9ca2a7;"></div>
<div class="a" style="left:238px;top:15px;width:13px;height:3px;background:#9ca2a7;"></div>
<div class="t" style="left:260px;top:10px;font-size:13px;line-height:13px;color:#f0f0f1;font-weight:normal;font-style:normal;letter-spacing:0.1px;">New</div>
<div class="t" style="left:302px;top:10px;font-size:13px;line-height:13px;color:#f0f0f1;font-weight:normal;font-style:normal;letter-spacing:0.25px;">View Property</div>
<div class="t" style="right:30px;top:10px;font-size:13px;line-height:13px;color:#f0f0f1;letter-spacing:0.3px">Howdy, test developer</div>
<div class="a" style="left:1861px;top:7px;width:18px;height:18px;background:#c4c4c4;border:1px solid #8c8f94;"></div>
<svg class="a" style="left:1861px;top:7px;" width="18" height="18" viewBox="1861 7 18 18"><circle cx="1869.9" cy="15.9" r="3.3" fill="#fff"/><path d="M1863.9 23.6 C1864.5 20.8 1866.5 19.5 1869.9 19.5 S1875.2 20.8 1875.7 23.6 Z" fill="#fff"/></svg>
</body></html>
